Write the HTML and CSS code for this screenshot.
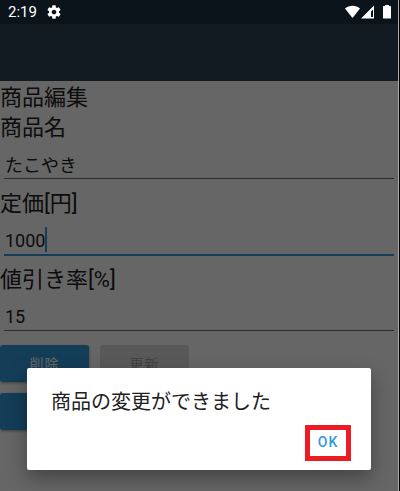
FILE: index.html
```html
<!DOCTYPE html>
<html lang="ja">

<head>
    <meta charset="UTF-8">
    <meta name="viewport" content="width=device-width, initial-scale=1.0">
    <title>商品編集</title>
    <link rel="stylesheet" href="styles.css">
</head>

<body>
    <div class="screen">
        <header class="status-bar">
            <span class="clock">2:19</span>
            <svg class="gear" viewBox="0 0 24 24" width="16" height="16">
                <path fill="#fff" d="M19.43 12.98c.04-.32.07-.64.07-.98s-.03-.66-.07-.98l2.11-1.65c.19-.15.24-.42.12-.64l-2-3.46c-.12-.22-.39-.3-.61-.22l-2.49 1c-.52-.4-1.08-.73-1.69-.98l-.38-2.65C14.46 2.18 14.25 2 14 2h-4c-.25 0-.46.18-.49.42l-.38 2.65c-.61.25-1.17.59-1.69.98l-2.49-1c-.23-.09-.49 0-.61.22l-2 3.46c-.13.22-.07.49.12.64l2.11 1.65c-.04.32-.07.65-.07.98s.03.66.07.98l-2.11 1.65c-.19.15-.24.42-.12.64l2 3.46c.12.22.39.3.61.22l2.49-1c.52.4 1.08.73 1.69.98l.38 2.65c.03.24.24.42.49.42h4c.25 0 .46-.18.49-.42l.38-2.65c.61-.25 1.17-.59 1.69-.98l2.49 1c.23.09.49 0 .61-.22l2-3.46c.12-.22.07-.49-.12-.64l-2.11-1.65zM12 15.500c-1.930 0-3.500-1.570-3.500-3.500s1.570-3.500 3.500-3.500 3.500 1.570 3.500 3.500-1.570 3.500-3.500 3.500z" />
            </svg>
            <svg class="signals" viewBox="0 0 46 14" width="46" height="14">
                <path fill="#fff" d="M0 3.600C4.200-.1 10.800-.1 15 3.600L7.500 13z" />
                <path fill="#fff" fill-rule="evenodd" d="M29 .5V13.500H16zM28 4.500L26 6.500V12H28z" />
                <path fill="#fff" d="M38.500 1H40V0h4v1h1.500q.5 0 .5.5v11.500q0 .5-.5.5h-7q-.5 0-.5-.5V1.500q0-.5.500-.5z" />
            </svg>
        </header>
        <div class="app-bar"></div>

        <form class="edit-form">
            <h1 class="title">商品編集</h1>

            <label class="label" for="name">商品名</label>
            <div class="field">
                <input id="name" class="input" type="text" value="たこやき">
            </div>

            <label class="label" for="price">定価[円]</label>
            <div class="field">
                <input id="price" class="input active" type="text" value="1000">
                <span class="caret"></span>
            </div>

            <label class="label" for="discount">値引き率[%]</label>
            <div class="field">
                <input id="discount" class="input" type="text" value="15">
            </div>

            <div class="buttons">
                <button type="button" class="btn">削除</button>
                <button type="button" class="btn" disabled>更新</button>
            </div>
            <div class="buttons">
                <button type="button" class="btn" aria-label="戻る"></button>
            </div>
        </form>

        <div class="scrim">
            <div class="dialog" role="alertdialog" aria-labelledby="message">
                <p class="message" id="message">商品の変更ができました</p>
                <button type="button" class="ok">OK</button>
            </div>
        </div>
    </div>
</body>

</html>
```

FILE: styles.css
```css
* {
    box-sizing: border-box;
}

body {
    margin: 0;
    border-right: 1px solid #000;
    font-family: Roboto, "Noto Sans CJK JP", sans-serif;
    color: #212121;
}

.screen {
    position: relative;
    min-height: 100vh;
    border-right: 1px solid #aaa;
    background: #fff;
    overflow: hidden;
}

.status-bar {
    position: relative;
    z-index: 2;
    display: flex;
    align-items: center;
    height: 24px;
    padding: 0 7px 0 8px;
    background: #0b131b;
    color: #fff;
}

.clock {
    font-size: 15px;
    line-height: 24px;
}

.gear {
    margin-left: 9px;
}

.signals {
    margin-left: auto;
}

.app-bar {
    height: 57px;
    background: #2f4355;
}

.edit-form {
    padding-top: 2px;
}

.title,
.label {
    display: block;
    margin: 0;
    font-size: 22px;
    font-weight: 400;
    line-height: 30px;
}

.field {
    position: relative;
    height: 46px;
    padding: 0 4px;
}

.input {
    display: block;
    width: 100%;
    height: 36px;
    padding: 7px 0 0 1px;
    border: 0;
    border-bottom: 1px solid #737373;
    border-radius: 0;
    background: none;
    color: inherit;
    font: inherit;
    font-size: 18px;
    outline: none;
}

.input.active {
    height: 37px;
    border-bottom: 2px solid #3498db;
}

.caret {
    position: absolute;
    left: 45px;
    top: 8px;
    width: 2px;
    height: 25px;
    background: #3498db;
}

.buttons {
    display: flex;
    gap: 11px;
    margin: 4px 0 11px;
}

.buttons + .buttons {
    margin-top: 0;
}

.btn {
    width: 89px;
    height: 37px;
    padding: 0 0 2px;
    border: 0;
    border-radius: 3px;
    background: #3498db;
    box-shadow: 0 1px 3px rgba(0, 0, 0, 0.4);
    color: #fff;
    font: inherit;
    font-size: 14px;
    letter-spacing: 1px;
}

.btn:disabled {
    background: #dedede;
    box-shadow: none;
    color: #a4a4a4;
}

.scrim {
    position: absolute;
    inset: 0;
    display: flex;
    align-items: flex-end;
    padding: 0 27px 21px;
    background: rgba(0, 0, 0, 0.6);
}

.dialog {
    display: flex;
    flex: 1;
    flex-direction: column;
    align-items: flex-end;
    padding: 19px 20px 9px 24px;
    border-radius: 2px;
    background: #fff;
    box-shadow: 0 8px 20px rgba(0, 0, 0, 0.35);
}

.message {
    align-self: stretch;
    margin: 0 0 8px;
    font-size: 20px;
    line-height: 30px;
}

.ok {
    width: 46px;
    height: 36px;
    padding: 0 0 2px;
    border: 5px solid #ed1c24;
    background: #fff;
    color: #3498db;
    font: inherit;
    font-size: 14px;
    font-weight: 500;
    letter-spacing: 1px;
}
```
